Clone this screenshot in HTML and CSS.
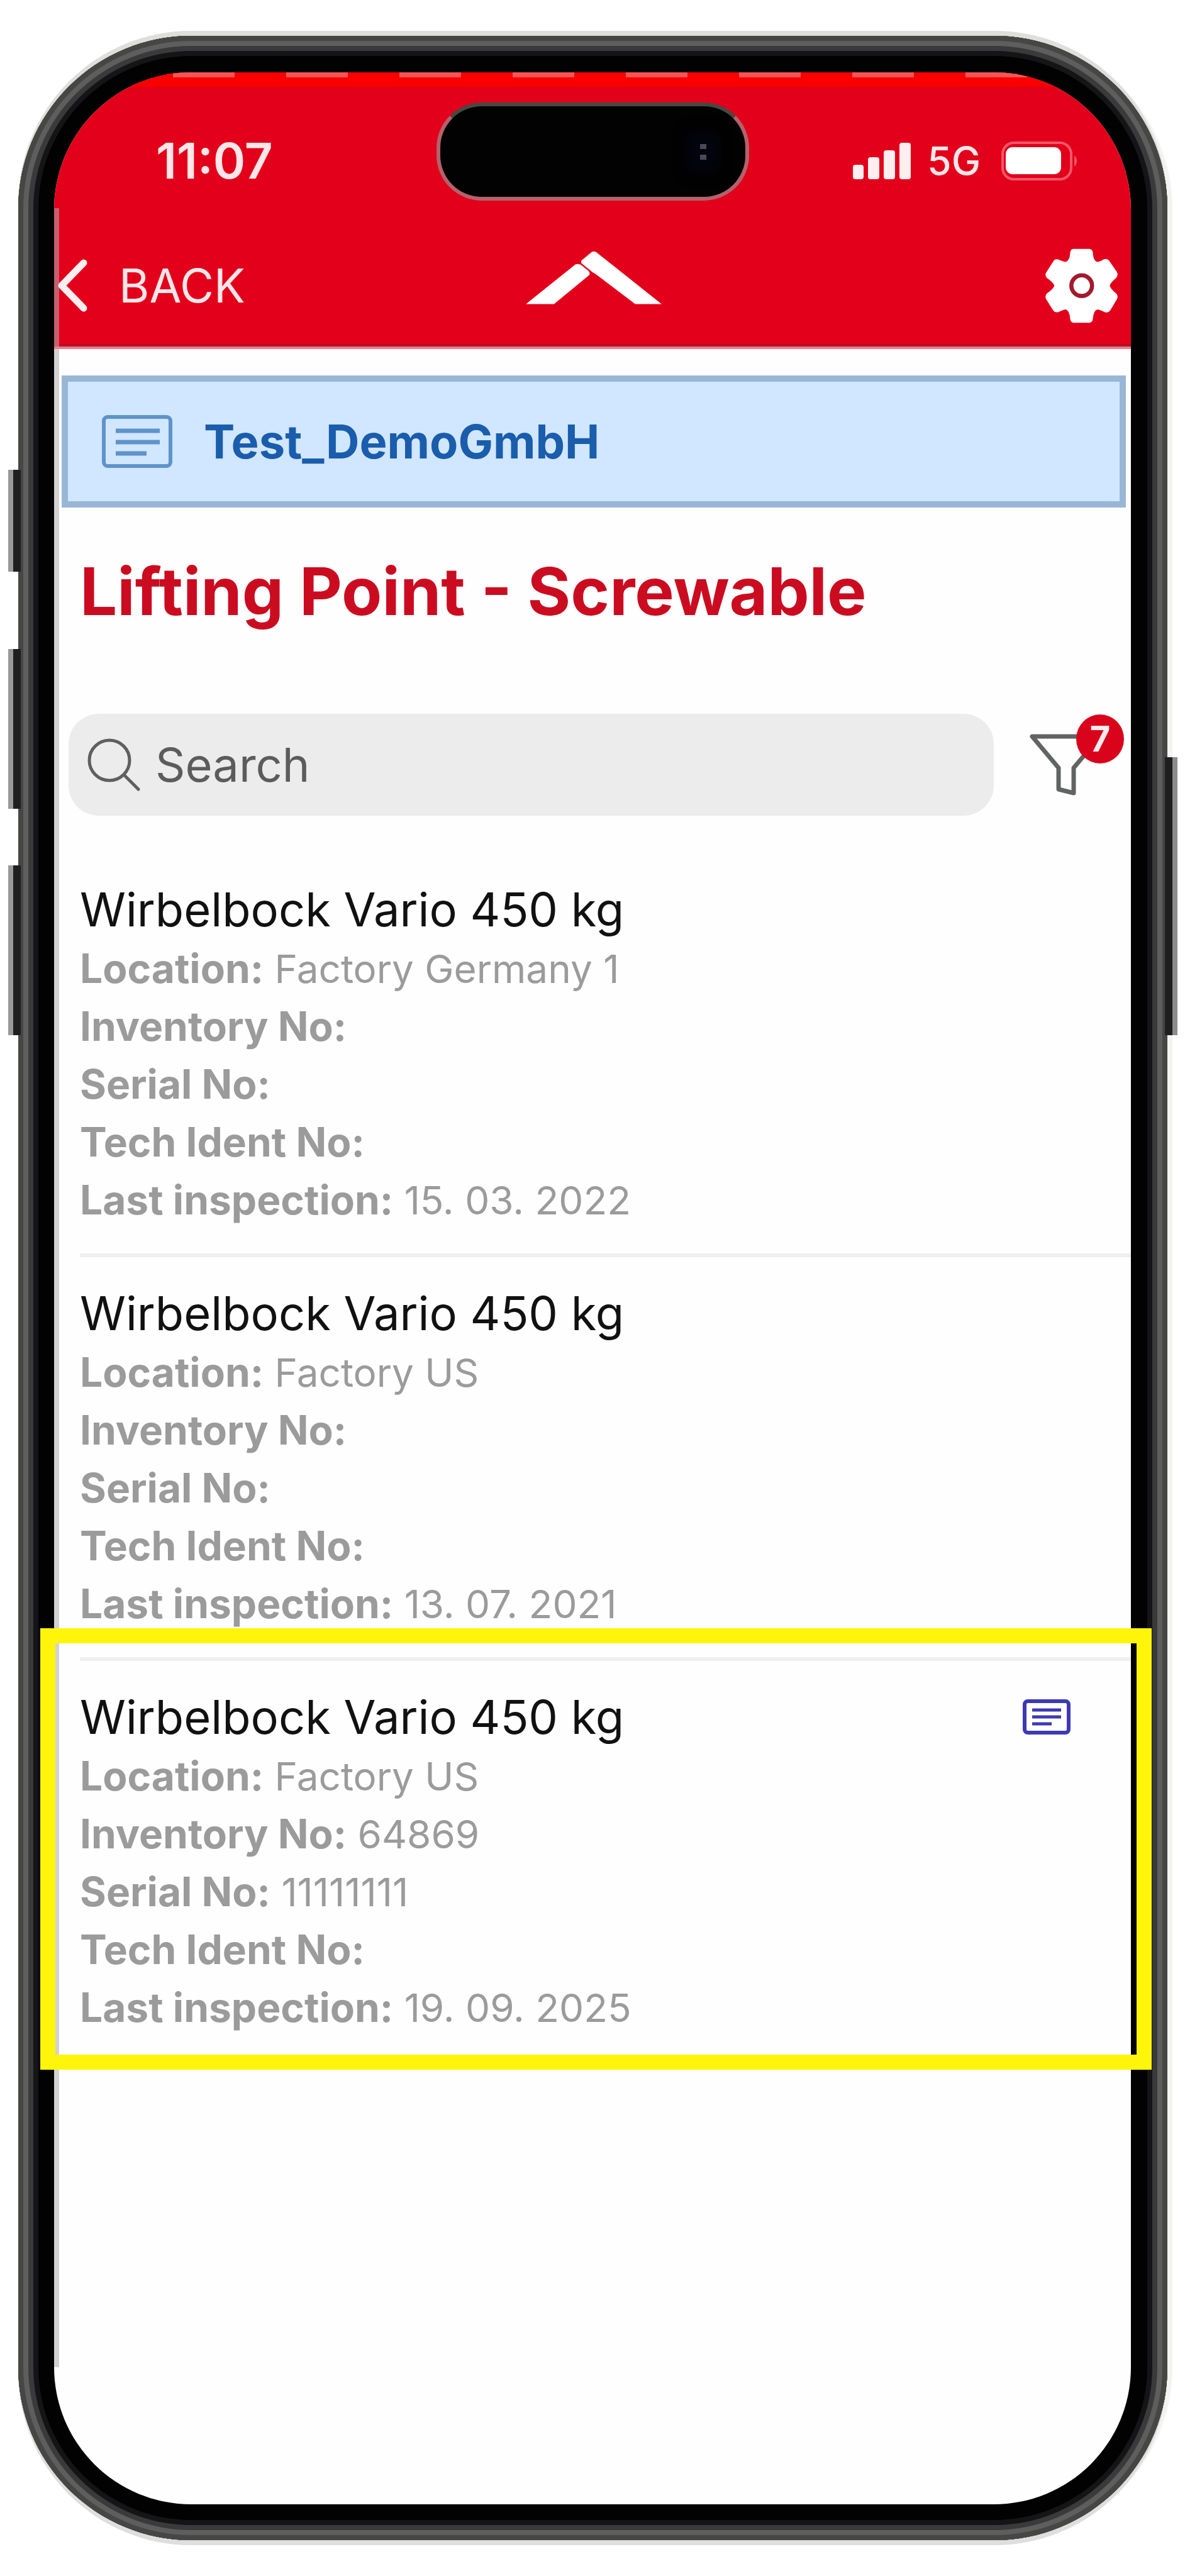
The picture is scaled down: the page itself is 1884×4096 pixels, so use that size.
FILE: index.html
```html
<!DOCTYPE html>
<html lang="en">
<head>
	<meta charset="utf-8">
	<meta name="viewport" content="width=device-width, initial-scale=1">
	<title>Lifting Point - Screwable</title>
	<link rel="stylesheet" href="styles.css">
</head>
<body>
<div class="phone">
	<span class="key key-action"></span>
	<span class="key key-up"></span>
	<span class="key key-down"></span>
	<span class="key key-power"></span>

	<div class="screen">
		<header class="header">
			<div class="status">
				<span class="time">11:07</span>
				<div class="island"><span class="camera"></span></div>
				<div class="signals">
					<svg class="bars" viewBox="0 0 92 58" fill="#ffeef0">
						<rect x="0" y="35" width="17" height="23" rx="4"/>
						<rect x="24" y="23" width="18" height="35" rx="4"/>
						<rect x="49" y="12" width="18" height="46" rx="4"/>
						<rect x="74" y="0" width="18" height="58" rx="4"/>
					</svg>
					<span class="network">5G</span>
					<svg class="battery" viewBox="0 0 124 62">
						<rect x="2" y="2" width="109" height="58" rx="18" fill="none" stroke="#f4566a" stroke-width="4"/>
						<rect x="7" y="9" width="88" height="43" rx="11" fill="#fff"/>
						<path d="M116 22q8 9 0 18z" fill="#f4566a"/>
					</svg>
				</div>
			</div>
			<nav class="nav">
				<a class="back" href="#">
					<svg class="chevron" viewBox="0 0 48 84"><path d="M42 6L7 42l35 36" fill="none" stroke="#ffeef0" stroke-width="11" stroke-linecap="round" stroke-linejoin="round"/></svg>
					BACK
				</a>
				<svg class="logo" viewBox="40 80 792 312" fill="#fff">
					<path d="M40 390L330 158Q348 152 362 162L404 196Q418 208 408 222L204 390z"/>
					<path d="M362 138L424 86Q438 78 452 88L832 390H678L470 232Q450 216 428 204L364 152z"/>
				</svg>
				<button class="settings" type="button" aria-label="Settings">
					<svg class="gear" viewBox="42 34 420 434">
						<path fill="#fff" d="M204 36H296Q316 38 318 58Q320 108 346 112Q366 108 384 96Q404 92 416 110L458 172Q466 188 454 204Q416 236 416 250Q416 264 454 296Q466 310 458 328L420 392Q408 410 388 404Q366 392 346 388Q322 392 318 442Q316 464 296 466H206Q188 464 186 442Q182 392 158 388Q138 392 116 404Q96 408 86 392L46 328Q38 310 50 296Q94 264 94 250Q94 236 50 204Q38 190 46 174L86 112Q96 92 116 98Q138 108 158 112Q184 106 186 58Q188 38 204 36z"/>
						<ellipse cx="253" cy="250" rx="60" ry="60" fill="none" stroke="#a31a2c" stroke-width="24"/>
					</svg>
				</button>
			</nav>
		</header>

		<main class="content">
			<div class="customer">
				<svg class="customer-icon" viewBox="0 0 112 86" fill="none" stroke="#5f93ca">
					<rect x="3" y="4" width="106" height="78" rx="6" stroke-width="6"/>
					<path d="M22 26h70M22 44h70M22 62h49" stroke-width="7"/>
				</svg>
				<span>Test_DemoGmbH</span>
			</div>

			<h1>Lifting Point - Screwable</h1>

			<div class="tools">
				<label class="search">
					<svg class="lens" viewBox="0 0 84 84" fill="none" stroke="#5f5f5f" stroke-width="5" stroke-linecap="round"><circle cx="35" cy="35" r="32"/><path d="M58 58l23 23"/></svg>
					<input type="search" placeholder="Search" aria-label="Search">
				</label>
				<button class="filter" type="button" aria-label="Filter">
					<svg class="funnel" viewBox="0 0 116 98" fill="none" stroke="#626464" stroke-width="7" stroke-linejoin="round"><path d="M4 4H112L70 54V94L46 88V54z"/></svg>
					<span class="count">7</span>
				</button>
			</div>

			<ul class="list">
				<li class="item">
					<h2>Wirbelbock Vario 450 kg</h2>
					<p><b>Location:</b> Factory Germany 1</p>
					<p><b>Inventory No:</b></p>
					<p><b>Serial No:</b></p>
					<p><b>Tech Ident No:</b></p>
					<p><b>Last inspection:</b> 15. 03. 2022</p>
				</li>
				<li class="item">
					<h2>Wirbelbock Vario 450 kg</h2>
					<p><b>Location:</b> Factory US</p>
					<p><b>Inventory No:</b></p>
					<p><b>Serial No:</b></p>
					<p><b>Tech Ident No:</b></p>
					<p><b>Last inspection:</b> 13. 07. 2021</p>
				</li>
				<li class="item marked">
					<h2>Wirbelbock Vario 450 kg
						<svg class="note" viewBox="0 0 76 56" fill="none" stroke="#3d39b4">
							<rect x="3" y="3" width="70" height="50" rx="5" stroke-width="6"/>
							<path d="M15 17h46M15 28h46M15 39h31" stroke-width="5"/>
						</svg>
					</h2>
					<p><b>Location:</b> Factory US</p>
					<p><b>Inventory No:</b> 64869</p>
					<p><b>Serial No:</b> 11111111</p>
					<p><b>Tech Ident No:</b></p>
					<p><b>Last inspection:</b> 19. 09. 2025</p>
				</li>
			</ul>
		</main>
	</div>
</div>
</body>
</html>
```
FILE: styles.css
```css
* {
	box-sizing: border-box;
}

body {
	margin: 0;
	min-height: 100vh;
	display: flex;
	background: #fff;
	font-family: Inter, "Liberation Sans", sans-serif;
}

h1, h2, p, ul {
	margin: 0;
	padding: 0;
}

button {
	border: 0;
	padding: 0;
	background: none;
	font-family: inherit;
}

svg {
	display: block;
	flex: none;
}

/* phone body */
.phone {
	position: relative;
	flex: 1;
	display: flex;
	margin: 57px 28px 57px 29px;
	padding: 58px 58px 57px 57px;
	border-radius: 275px;
	background: #020203;
	box-shadow:
		inset 0 0 0 8px #464645,
		inset 0 0 0 16px #5e5e5f,
		inset 0 0 0 24px #3a3a3b,
		inset 0 0 0 32px #151517,
		0 -8px 0 0 #dededd,
		0 8px 0 0 #dedede,
		8px 0 0 0 #f3f3f2;
}

.key {
	position: absolute;
	left: -16px;
	width: 20px;
	background: #1f1f22;
	border-left: 8px solid #999;
}

.key-action {
	top: 690px;
	height: 162px;
}

.key-up {
	top: 975px;
	height: 254px;
}

.key-down {
	top: 1319px;
	height: 270px;
}

.key-power {
	left: auto;
	right: -16px;
	top: 1147px;
	height: 442px;
	border-left: 0;
	border-right: 8px solid #8c8c8a;
}

.screen {
	position: relative;
	flex: 1;
	background: #fefefe;
	border-radius: 218px;
}

/* header */
.header {
	padding-top: 48px;
	border-radius: 218px 218px 0 0;
	border-bottom: 4px solid #e8808c;
	background:
		linear-gradient(#c5616c, #c5616c) 0 100% / 8px 220px no-repeat,
		linear-gradient(#b80f20, #b80f20) 0 100% / 100% 4px no-repeat,
		repeating-linear-gradient(90deg, transparent 0 9px, #f85454 9px 107px, transparent 107px 180px) 0 0 / 100% 8px no-repeat,
		linear-gradient(#fa0000, #fa0000) 0 0 / 100% 23px no-repeat,
		#e2001a;
	color: #ffe6e9;
}

.status {
	display: grid;
	grid-template-columns: 1fr auto 1fr;
	align-items: center;
}

.time {
	padding: 30px 0 0 162px;
	font-size: 78px;
	line-height: 80px;
	font-weight: 600;
}

.island {
	display: flex;
	justify-content: flex-end;
	align-items: center;
	width: 497px;
	height: 156px;
	padding-right: 62px;
	border: 6px solid #b3626c;
	border-top-color: #474743;
	border-radius: 72px;
	background: #020202;
}

.camera {
	width: 10px;
	height: 25px;
	border: solid #474a58;
	border-width: 8px 0;
	box-shadow: 0 0 20px 20px #04040f;
}

.signals {
	display: flex;
	justify-content: flex-end;
	align-items: center;
	padding: 30px 82px 0 0;
}

.bars {
	width: 92px;
	height: 58px;
}

.network {
	margin: 0 33px 0 26px;
	font-size: 62px;
	line-height: 80px;
	font-weight: 500;
}

.battery {
	width: 124px;
	height: 62px;
}

.nav {
	display: grid;
	grid-template-columns: 1fr auto 1fr;
	align-items: center;
	height: 232px;
	padding: 38px 21px 0 5px;
}

.back {
	display: flex;
	align-items: center;
	gap: 50px;
	color: inherit;
	font-size: 74px;
	text-decoration: none;
}

.chevron {
	width: 48px;
	height: 84px;
}

.logo {
	width: 216px;
	height: 85px;
	margin: 0 0 26px 20px;
}

.settings {
	justify-self: end;
}

.gear {
	width: 115px;
	height: 119px;
}

/* content */
.content {
	padding: 42px 0 218px;
}

.content::before {
	content: "";
	position: absolute;
	left: 0;
	top: 440px;
	bottom: 218px;
	width: 8px;
	background: #d2d2d2;
}

.customer {
	display: flex;
	align-items: center;
	gap: 50px;
	height: 210px;
	margin: 0 8px 0 12px;
	padding: 0 54px;
	border: 10px solid #98b7d6;
	background: #d1e6ff;
	color: #1a5dac;
	font-size: 74px;
	font-weight: 700;
}

.customer-icon {
	width: 112px;
	height: 86px;
}

h1 {
	margin: 69px 0 131px 41px;
	color: #cb0c20;
	font-size: 105px;
	line-height: 128px;
	font-weight: 700;
}

.tools {
	display: flex;
	align-items: center;
	justify-content: space-between;
	padding: 0 11px 0 23px;
}

.search {
	flex: 1;
	display: flex;
	align-items: center;
	gap: 24px;
	height: 162px;
	padding: 0 30px;
	border-radius: 48px;
	background: #ececec;
}

.lens {
	width: 84px;
	height: 84px;
}

.search input {
	flex: 1;
	min-width: 0;
	border: 0;
	padding: 0;
	background: none;
	outline: 0;
	color: #5c5c5c;
	font: 400 74px/96px Inter, "Liberation Sans", sans-serif;
}

.search input::placeholder {
	color: #5c5c5c;
	opacity: 1;
}

.filter {
	position: relative;
	width: 150px;
	margin-left: 57px;
}

.funnel {
	width: 116px;
	height: 98px;
}

.count {
	position: absolute;
	top: -31px;
	right: 0;
	width: 76px;
	height: 78px;
	border-radius: 50%;
	background: #d9041b;
	color: #ffe9ec;
	font-size: 56px;
	line-height: 78px;
	font-weight: 700;
}

.list {
	padding: 60px 0 0 41px;
	list-style: none;
}

.item {
	position: relative;
	padding: 40px 0 38px;
	border-bottom: 6px solid #efeff1;
}

.item:last-child {
	border-bottom: 0;
}

.item h2 {
	display: flex;
	align-items: center;
	justify-content: space-between;
	padding-right: 96px;
	color: #111;
	font-size: 74px;
	line-height: 98px;
	font-weight: 400;
}

.item p {
	color: #9b9b9b;
	font-size: 62px;
	line-height: 92px;
}

.item b {
	font-size: 64px;
	line-height: 1;
	font-weight: 700;
}

.note {
	width: 76px;
	height: 56px;
}

/* yellow frame around the item that has a note */
.marked::after {
	content: "";
	position: absolute;
	left: -63px;
	right: -33px;
	top: -52px;
	bottom: -14px;
	border: 24px solid #fff50a;
}
```
